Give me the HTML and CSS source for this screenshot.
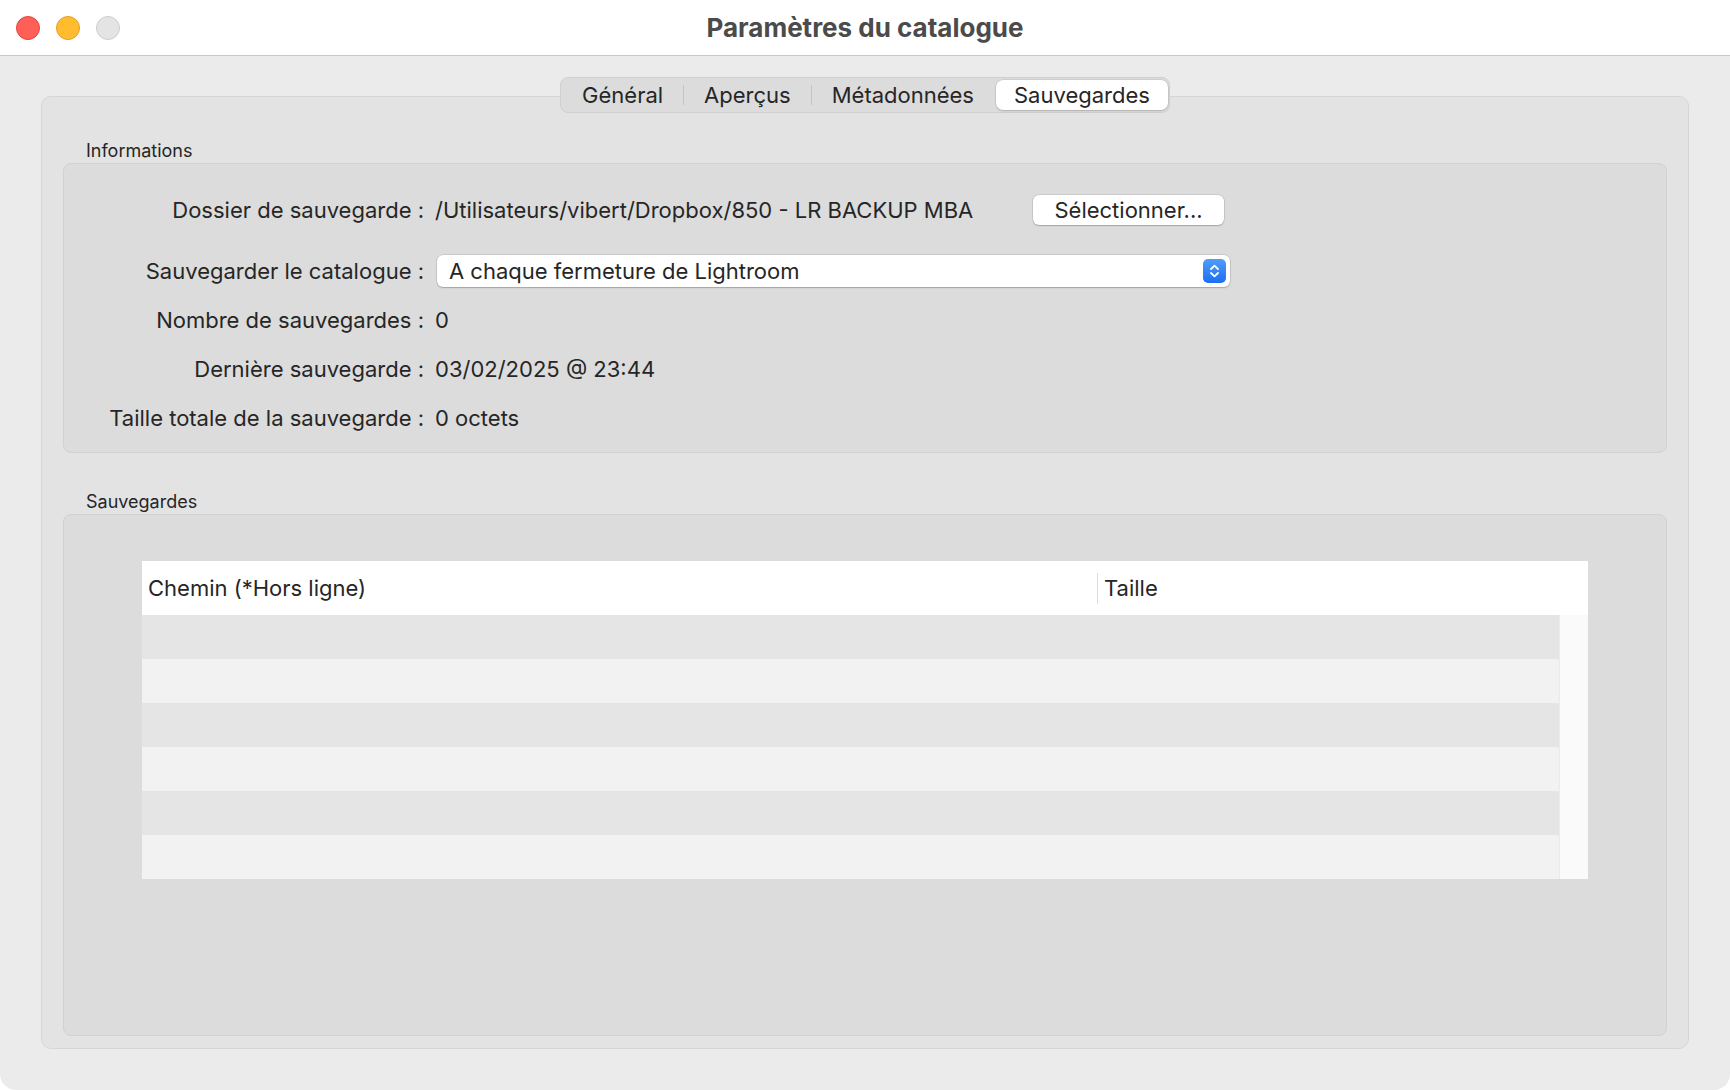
FILE: index.html
```html
<!DOCTYPE html>
<html lang="fr">
<head>
    <meta charset="UTF-8">
    <meta name="viewport" content="width=device-width, initial-scale=1.0">
    <title>Paramètres du catalogue</title>
    <link rel="stylesheet" href="styles.css">
</head>
<body>
    <div class="window">
        <div class="titlebar">
            <div class="lights">
                <span class="light red"></span>
                <span class="light yellow"></span>
                <span class="light gray"></span>
            </div>
            <div class="title">Paramètres du catalogue</div>
        </div>

        <div class="content">
            <div class="tabs">
                <div class="tab">Général</div>
                <div class="sep"></div>
                <div class="tab">Aperçus</div>
                <div class="sep"></div>
                <div class="tab">Métadonnées</div>
                <div class="tab active">Sauvegardes</div>
            </div>

            <div class="panel">
                <div class="group-label">Informations</div>
                <div class="group info">
                    <div class="row first">
                        <div class="label">Dossier de sauvegarde :</div>
                        <div class="value path">
                            <span>/Utilisateurs/vibert/Dropbox/850 - LR BACKUP MBA</span>
                            <button class="btn">Sélectionner...</button>
                        </div>
                    </div>
                    <div class="row">
                        <div class="label">Sauvegarder le catalogue :</div>
                        <div class="value">
                            <div class="select">
                                <span>A chaque fermeture de Lightroom</span>
                                <svg class="stepper" width="23" height="24" viewBox="0 0 23 24">
                                    <defs>
                                        <linearGradient id="blue" x1="0" y1="0" x2="0" y2="1">
                                            <stop offset="0" stop-color="#4f9dfb"/>
                                            <stop offset="1" stop-color="#1c6ef2"/>
                                        </linearGradient>
                                    </defs>
                                    <rect width="23" height="24" rx="5" fill="url(#blue)"/>
                                    <path d="M8 10 L11.5 6.6 L15 10" fill="none" stroke="#fff" stroke-width="1.8" stroke-linecap="round" stroke-linejoin="round"/>
                                    <path d="M8 14 L11.5 17.4 L15 14" fill="none" stroke="#fff" stroke-width="1.8" stroke-linecap="round" stroke-linejoin="round"/>
                                </svg>
                            </div>
                        </div>
                    </div>
                    <div class="row">
                        <div class="label">Nombre de sauvegardes :</div>
                        <div class="value">0</div>
                    </div>
                    <div class="row">
                        <div class="label">Dernière sauvegarde :</div>
                        <div class="value">03/02/2025 @ 23:44</div>
                    </div>
                    <div class="row">
                        <div class="label">Taille totale de la sauvegarde :</div>
                        <div class="value">0 octets</div>
                    </div>
                </div>

                <div class="group-label second">Sauvegardes</div>
                <div class="group backups">
                    <div class="table">
                        <div class="thead">
                            <div class="th col-path">Chemin (*Hors ligne)</div>
                            <div class="th col-size">Taille</div>
                        </div>
                        <div class="tbody">
                            <div class="rows">
                                <div class="tr"></div>
                                <div class="tr"></div>
                                <div class="tr"></div>
                                <div class="tr"></div>
                                <div class="tr"></div>
                                <div class="tr"></div>
                            </div>
                            <div class="scroll"></div>
                        </div>
                    </div>
                </div>
            </div>
        </div>
    </div>
</body>
</html>
```

FILE: styles.css
```css
html, body {
    margin: 0;
    height: 100%;
    background-color: #fff;
}
body {
    font-family: Inter, "Noto Sans", sans-serif;
    color: #262626;
}
.window {
    height: 1090px;
    background-color: #ebebeb;
    border-radius: 0 0 16px 16px;
    display: flex;
    flex-direction: column;
    overflow: hidden;
}
.titlebar {
    height: 56px;
    box-sizing: border-box;
    background-color: #fff;
    border-bottom: 1px solid #c9c9c9;
    display: flex;
    align-items: center;
    position: relative;
}
.lights {
    display: flex;
    gap: 16px;
    padding-left: 16px;
}
.light {
    width: 24px;
    height: 24px;
    border-radius: 50%;
    box-sizing: border-box;
}
.light.red {
    background-color: #fe5f57;
    border: 1px solid #e2463f;
}
.light.yellow {
    background-color: #febc2e;
    border: 1px solid #e0a028;
}
.light.gray {
    background-color: #e4e4e4;
    border: 1px solid #cdcdcd;
}
.title {
    position: absolute;
    left: 0;
    right: 0;
    text-align: center;
    font-size: 26px;
    font-weight: 700;
    color: #4b4b4b;
}
.content {
    flex: 1;
    padding: 21px 41px 41px;
    display: flex;
    flex-direction: column;
    align-items: center;
}
.tabs {
    display: flex;
    align-items: center;
    height: 34px;
    background-color: #dcdcdc;
    border: 1px solid #d0d0d0;
    border-radius: 8px;
    padding: 0 1px;
    margin-bottom: -17px;
    position: relative;
    z-index: 1;
    font-size: 22px;
    color: #262626;
}
.tab {
    padding: 0 20px;
    line-height: 30px;
}
.sep {
    width: 1px;
    height: 20px;
    background-color: #c4c4c4;
}
.tab.active {
    margin-left: 2px;
    background-color: #fff;
    border-radius: 7px;
    box-shadow: 0 0 0 0.5px rgba(0, 0, 0, 0.12), 0 1px 2px rgba(0, 0, 0, 0.15);
    padding: 0 18px;
}
.panel {
    align-self: stretch;
    flex: 1;
    background-color: #e3e3e3;
    border: 1px solid #d6d6d6;
    border-radius: 10px;
    padding: 43px 21px 12px;
    display: flex;
    flex-direction: column;
}
.group-label {
    font-size: 18px;
    padding-left: 23px;
    height: 22px;
    line-height: 22px;
    margin-bottom: 1px;
}
.group-label.second {
    margin-top: 38px;
}
.group {
    background-color: #dcdcdc;
    border: 1px solid #d1d1d1;
    border-radius: 8px;
}
.info {
    padding: 22px 0 10px;
}
.row {
    display: grid;
    grid-template-columns: 360px 1fr;
    column-gap: 11px;
    align-items: center;
    height: 49px;
    font-size: 22px;
}
.row.first {
    height: 48px;
    margin-bottom: 12px;
}
.label {
    text-align: right;
    white-space: nowrap;
}
.value {
    display: flex;
    align-items: center;
}
.path span {
    width: 598px;
}
.btn {
    width: 191px;
    height: 30px;
    font-family: inherit;
    font-size: 22px;
    color: #262626;
    background-color: #fff;
    border: none;
    border-radius: 6px;
    box-shadow: 0 0 0 0.5px rgba(0, 0, 0, 0.15), 0 1px 1.5px rgba(0, 0, 0, 0.2);
    padding: 0;
}
.select {
    width: 793px;
    height: 32px;
    margin-left: 2px;
    box-sizing: border-box;
    background-color: #fff;
    border-radius: 6px;
    box-shadow: 0 0 0 0.5px rgba(0, 0, 0, 0.15), 0 1px 1.5px rgba(0, 0, 0, 0.2);
    display: flex;
    align-items: center;
    justify-content: space-between;
    padding: 0 4px 0 12px;
}
.backups {
    flex: 1;
    padding: 46px 78px;
}
.table {
    display: flex;
    flex-direction: column;
}
.thead {
    display: flex;
    align-items: center;
    height: 54px;
    background-color: #fff;
    font-size: 22px;
}
.th {
    padding-left: 6px;
}
.col-path {
    width: 949px;
}
.col-size {
    border-left: 1px solid #dcdcdc;
    height: 31px;
    line-height: 31px;
}
.tbody {
    display: flex;
}
.rows {
    flex: 1;
}
.tr {
    height: 44px;
    background-color: #e5e5e5;
}
.tr:nth-child(even) {
    background-color: #f2f2f2;
}
.scroll {
    width: 28px;
    background-color: #fafafa;
    border-left: 1px solid #ebebeb;
}
```
